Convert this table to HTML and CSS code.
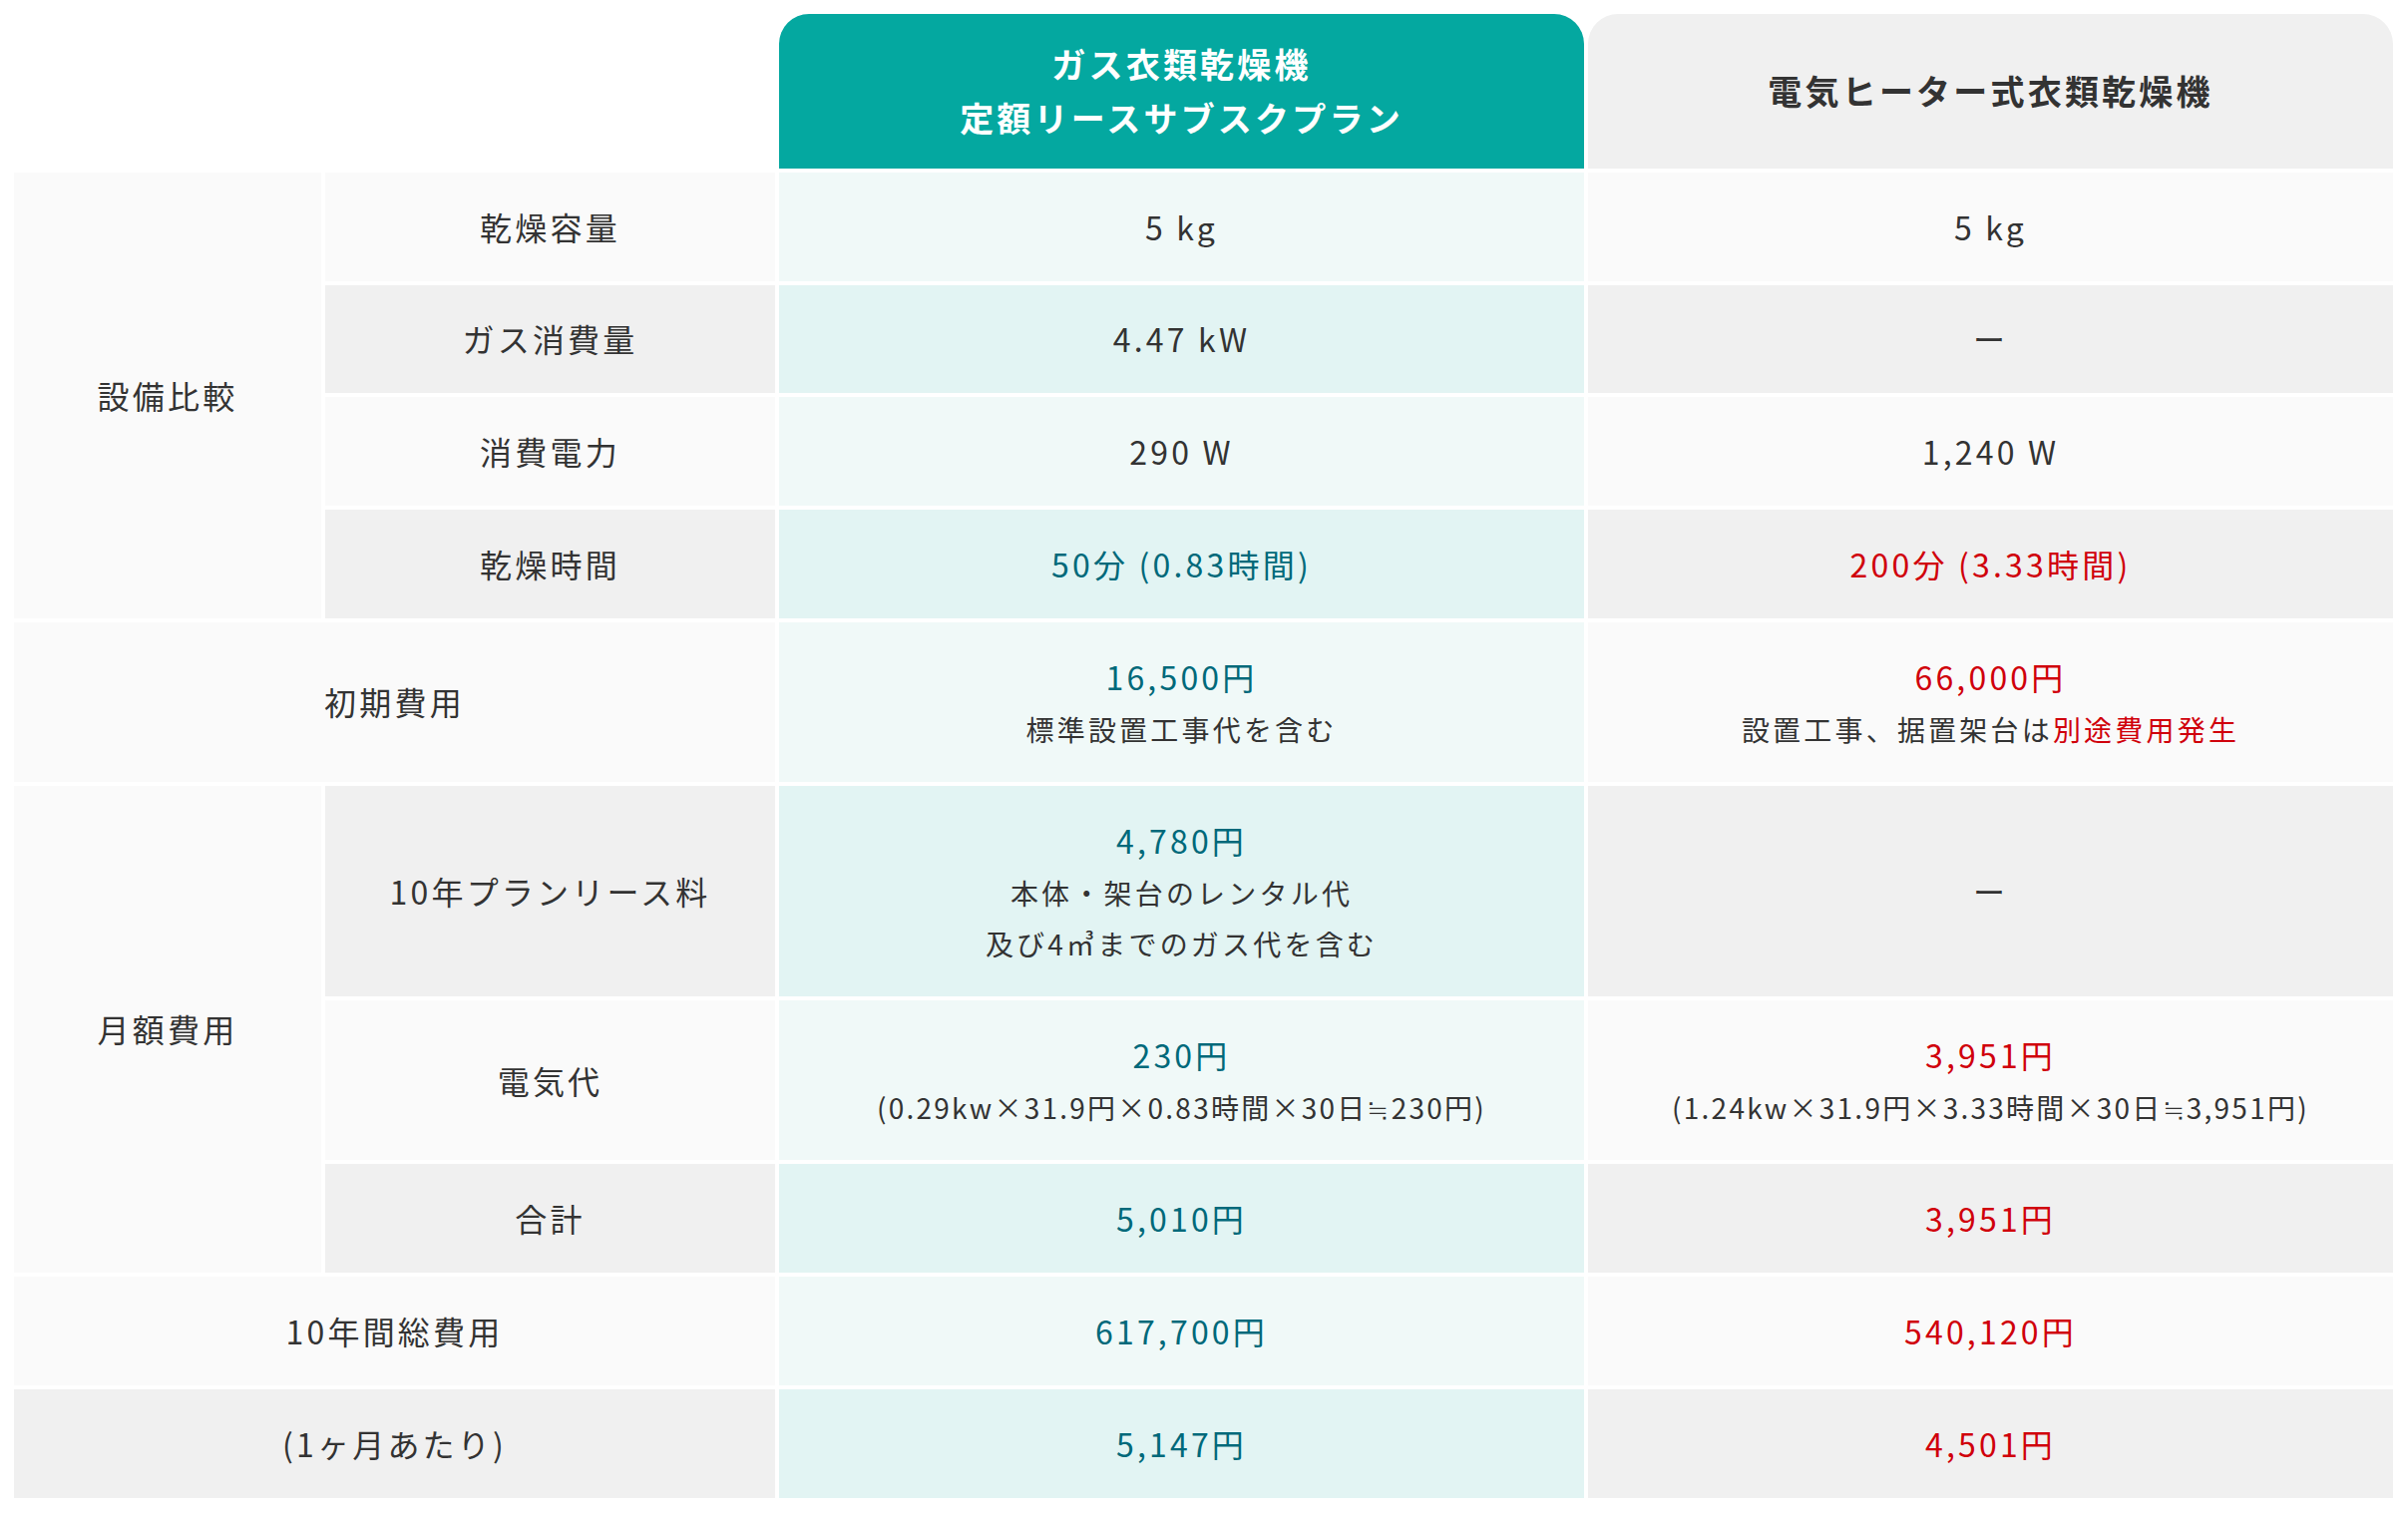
FILE: index.html
```html
<!DOCTYPE html>
<html lang="ja">
<head>
<meta charset="utf-8">
<title>ガス衣類乾燥機 比較表</title>
<link rel="stylesheet" href="styles.css">
</head>
<body>
<div class="compare">
  <div class="cell blank span-2"></div>
  <div class="cell head head-gas"><p class="inner">ガス衣類乾燥機<br>定額リースサブスクプラン</p></div>
  <div class="cell head head-elec"><p class="inner">電気ヒーター式衣類乾燥機</p></div>

  <div class="cell group rows-4"><p class="inner">設備比較</p></div>
  <div class="cell label odd"><p class="inner">乾燥容量</p></div>
  <div class="cell gas odd"><p class="inner">5 kg</p></div>
  <div class="cell elec odd"><p class="inner">5 kg</p></div>

  <div class="cell label even"><p class="inner">ガス消費量</p></div>
  <div class="cell gas even"><p class="inner">4.47 kW</p></div>
  <div class="cell elec even"><p class="inner">ー</p></div>

  <div class="cell label odd"><p class="inner">消費電力</p></div>
  <div class="cell gas odd"><p class="inner">290 W</p></div>
  <div class="cell elec odd"><p class="inner">1,240 W</p></div>

  <div class="cell label even"><p class="inner">乾燥時間</p></div>
  <div class="cell gas even"><p class="inner teal">50分 (0.83時間)</p></div>
  <div class="cell elec even"><p class="inner red">200分 (3.33時間)</p></div>

  <div class="cell label odd span-2"><p class="inner">初期費用</p></div>
  <div class="cell gas odd"><p class="inner"><span class="teal">16,500円</span><br><span class="sub">標準設置工事代を含む</span></p></div>
  <div class="cell elec odd"><p class="inner"><span class="red">66,000円</span><br><span class="sub">設置工事、据置架台は<span class="red">別途費用発生</span></span></p></div>

  <div class="cell group rows-3"><p class="inner">月額費用</p></div>
  <div class="cell label even"><p class="inner">10年プランリース料</p></div>
  <div class="cell gas even"><p class="inner"><span class="teal">4,780円</span><br><span class="sub">本体・架台のレンタル代</span><br><span class="sub">及び4㎥までのガス代を含む</span></p></div>
  <div class="cell elec even"><p class="inner">ー</p></div>

  <div class="cell label odd"><p class="inner">電気代</p></div>
  <div class="cell gas odd"><p class="inner"><span class="teal">230円</span><br><span class="sub formula">(0.29kw×31.9円×0.83時間×30日≒230円)</span></p></div>
  <div class="cell elec odd"><p class="inner"><span class="red">3,951円</span><br><span class="sub formula">(1.24kw×31.9円×3.33時間×30日≒3,951円)</span></p></div>

  <div class="cell label even"><p class="inner">合計</p></div>
  <div class="cell gas even"><p class="inner teal">5,010円</p></div>
  <div class="cell elec even"><p class="inner red">3,951円</p></div>

  <div class="cell label odd span-2"><p class="inner">10年間総費用</p></div>
  <div class="cell gas odd"><p class="inner teal">617,700円</p></div>
  <div class="cell elec odd"><p class="inner red">540,120円</p></div>

  <div class="cell label even span-2"><p class="inner">(1ヶ月あたり)</p></div>
  <div class="cell gas even"><p class="inner teal">5,147円</p></div>
  <div class="cell elec even"><p class="inner red">4,501円</p></div>
</div>
</body>
</html>
```

FILE: styles.css
```css
* {
  box-sizing: border-box;
}

html, body {
  margin: 0;
  padding: 0;
  background: #ffffff;
}

body {
  font-family: "Noto Sans CJK JP", "Noto Sans", sans-serif;
  color: #333333;
}

.compare {
  display: grid;
  grid-template-columns: 308px 451px 1fr 1fr;
  gap: 4px;
  padding: 14px 15px 14px 14px;
  font-size: 32px;
  line-height: 51.2px;
  letter-spacing: 0.1em;
}

.cell {
  display: flex;
  align-items: center;
  justify-content: center;
  text-align: center;
  padding: 28.8px 10px;
}

.inner {
  margin: 0;
}

.span-2 {
  grid-column: span 2;
}

.rows-4 {
  grid-row: span 4;
}

.rows-3 {
  grid-row: span 3;
}

.blank {
  background: #ffffff;
}

.head {
  font-size: 34px;
  line-height: 54.4px;
  font-weight: 700;
  padding: 23px 10px;
  border-radius: 30px 30px 0 0;
}

.head-gas {
  background: #04a8a0;
  color: #ffffff;
}

.head-elec {
  background: #f0f0f0;
  color: #333333;
}

.group {
  background: #fafafa;
}

.label.odd,
.elec.odd {
  background: #fafafa;
}

.label.even,
.elec.even {
  background: #f0f0f0;
}

.gas.odd {
  background: #f0f9f8;
}

.gas.even {
  background: #e2f4f3;
}

.teal {
  color: #00697a;
}

.red {
  color: #d0000b;
}

.sub {
  font-size: 28px;
  line-height: 1;
}

.formula {
  letter-spacing: 0.08em;
}
```
